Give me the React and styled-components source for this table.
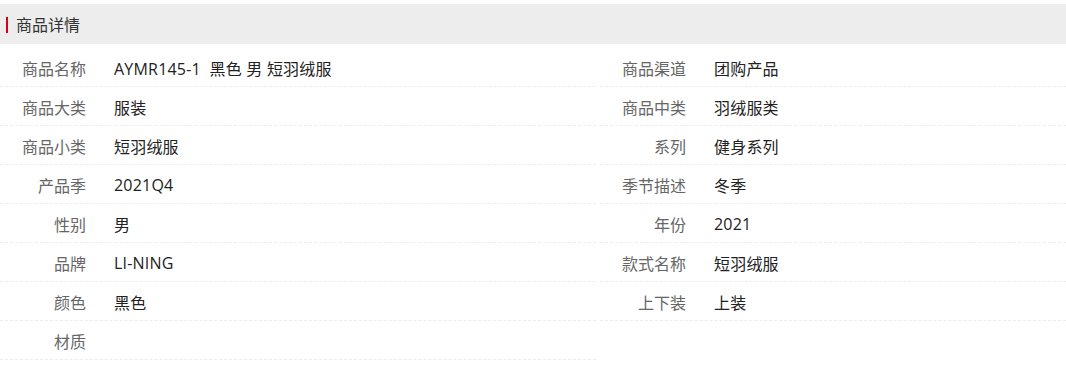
import React from "react";
import styled, { createGlobalStyle } from "styled-components";

const Global = createGlobalStyle`
  html, body { margin: 0; padding: 0; background: #fff; }
  body { font-family: "Open Sans", "Noto Sans CJK SC", sans-serif; }
`;

const Wrap = styled.div`
  padding-top: 4px;
  width: 1066px;
`;

const Header = styled.div`
  height: 40px;
  background: #ededed;
  display: flex;
  align-items: center;
  padding-left: 6px;
  gap: 8px;
  margin-bottom: 4px;
`;

const Bar = styled.span`
  width: 2px;
  height: 16px;
  background: #d7000f;
  margin-top: 1px;
`;

const Title = styled.span`
  font-size: 16px;
  color: #333;
  font-family: "Noto Sans CJK SC", sans-serif;
`;

const Grid = styled.div`
  display: grid;
  grid-template-columns: 596px 1fr;
  column-gap: 4px;
`;

const Row = styled.div`
  display: flex;
  align-items: center;
  border-bottom: 1px dashed #ececec;
  padding-top: 1px;
  box-sizing: border-box;
  height: 39px;
`;

const Label = styled.div`
  width: 86px;
  text-align: right;
  font-size: 16px;
  color: #666;
  flex: none;
`;

const Value = styled.div`
  margin-left: 28px;
  font-size: 16px;
  color: #222;
  white-space: pre;
  letter-spacing: 0.2px;
`;

const items = [
  ["商品名称", "AYMR145-1  黑色 男 短羽绒服"],
  ["商品渠道", "团购产品"],
  ["商品大类", "服装"],
  ["商品中类", "羽绒服类"],
  ["商品小类", "短羽绒服"],
  ["系列", "健身系列"],
  ["产品季", "2021Q4"],
  ["季节描述", "冬季"],
  ["性别", "男"],
  ["年份", "2021"],
  ["品牌", "LI-NING"],
  ["款式名称", "短羽绒服"],
  ["颜色", "黑色"],
  ["上下装", "上装"],
  ["材质", ""],
];

export default function App() {
  return (
    <>
      <Global />
      <Wrap>
        <Header>
          <Bar />
          <Title>商品详情</Title>
        </Header>
        <Grid>
          {items.map(([k, v]) => (
            <Row key={k}>
              <Label>{k}</Label>
              <Value>{v}</Value>
            </Row>
          ))}
        </Grid>
      </Wrap>
    </>
  );
}
